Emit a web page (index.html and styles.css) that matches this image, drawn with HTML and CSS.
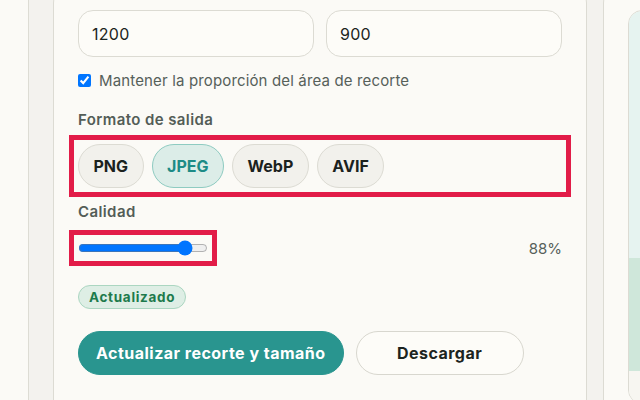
FILE: index.html
```html
<!DOCTYPE html>
<html lang="es">
<head>
<meta charset="utf-8">
<title>Recorte y tamaño</title>
<link rel="stylesheet" href="styles.css">
</head>
<body>
<div class="shell">
  <section class="card settings">
    <div class="size-row">
      <input class="field" type="text" value="1200" aria-label="Ancho">
      <input class="field" type="text" value="900" aria-label="Alto">
    </div>
    <label class="check-row">
      <input type="checkbox" class="check" checked>
      <span>Mantener la proporción del área de recorte</span>
    </label>
    <div class="label">Formato de salida</div>
    <div class="format-row highlight">
      <button class="pill">PNG</button>
      <button class="pill active">JPEG</button>
      <button class="pill">WebP</button>
      <button class="pill">AVIF</button>
    </div>
    <div class="label quality-label">Calidad</div>
    <div class="quality-row">
      <input type="range" class="slider highlight" min="10" max="100" value="88" aria-label="Calidad">
      <span class="quality-value">88%</span>
    </div>
    <span class="badge">Actualizado</span>
    <div class="actions">
      <button class="btn primary">Actualizar recorte y tamaño</button>
      <button class="btn secondary">Descargar</button>
    </div>
  </section>
  <section class="card preview-card">
    <div class="preview-box">
      <div class="preview-area">
        <div class="crop-block"></div>
      </div>
      <div class="preview-foot"></div>
    </div>
  </section>
</div>
</body>
</html>
```

FILE: styles.css
```css
html, body {
  margin: 0;
  padding: 0;
}
body {
  background: #fbfaf6;
  font-family: Inter, "Noto Sans", sans-serif;
  color: #1c2420;
  width: 640px;
  height: 400px;
  overflow: hidden;
}
.shell {
  margin-left: 28px;
  margin-top: -15px;
  border-left: 1px solid #dddcd4;
  background: #f3f2ee;
  padding: 0 24px 24px;
  display: grid;
  grid-template-columns: 534px 534px;
  column-gap: 16px;
  width: 1200px;
}
.card {
  background: #fbfaf6;
  border: 1px solid #dcdbd3;
  border-radius: 18px;
  padding: 24px;
  box-sizing: border-box;
}
.settings {
  display: flex;
  flex-direction: column;
}
.size-row {
  display: grid;
  grid-template-columns: 1fr 1fr;
  column-gap: 12px;
}
.field {
  height: 47px;
  box-sizing: border-box;
  border: 1px solid #dcdbd3;
  border-radius: 15px;
  background: #fdfcf8;
  padding: 0 13px;
  font: 400 16px Inter, "Noto Sans", sans-serif;
  letter-spacing: 0.3px;
  color: #1c2420;
  outline: none;
  min-width: 0;
}
.check-row {
  display: flex;
  align-items: center;
  gap: 8px;
  margin-top: 13px;
  height: 20px;
  font-size: 15px;
  letter-spacing: 0.15px;
  color: #56605a;
}
.check {
  margin: 0;
  width: 13px;
  height: 13px;
}
.label {
  margin-top: 20px;
  height: 20px;
  line-height: 20px;
  font-size: 15px;
  font-weight: 600;
  letter-spacing: 0.4px;
  color: #535d57;
}
.format-row {
  display: flex;
  gap: 8px;
  margin-top: 14px;
}
.highlight {
  outline: 5px solid #e21c48;
  outline-offset: 4px;
}
.pill {
  height: 44px;
  padding: 0 14.5px;
  border-radius: 22px;
  border: 1px solid #dcdbd3;
  background: #f2f1ec;
  font: 700 16px Inter, "Noto Sans", sans-serif;
  color: #1b221e;
}
.pill.active {
  background: #dcede8;
  border-color: #8ecbc1;
  color: #1d8b86;
}
.quality-label {
  margin-top: 14px;
}
.quality-row {
  display: flex;
  align-items: center;
  justify-content: space-between;
  margin-top: 17px;
  height: 18px;
}
.slider {
  margin: 0;
  width: 130px;
  height: 18px;
}
.quality-value {
  font-size: 15px;
  color: #56605a;
}
.badge {
  align-self: flex-start;
  margin-top: 28px;
  height: 24px;
  box-sizing: border-box;
  padding: 0 10px;
  display: inline-flex;
  align-items: center;
  border-radius: 12px;
  border: 1px solid #abd6c1;
  background: #deeee5;
  color: #1d7a4c;
  font-size: 13.5px;
  letter-spacing: 0.7px;
  font-weight: 700;
}
.actions {
  display: flex;
  gap: 12px;
  margin-top: 22px;
}
.btn {
  height: 44px;
  border-radius: 22px;
  padding: 0 17px;
  font: 700 16px Inter, "Noto Sans", sans-serif;
  letter-spacing: 0.48px;
}
.btn.primary {
  background: #29958f;
  border: 1px solid #29958f;
  color: #ffffff;
}
.btn.secondary {
  min-width: 168px;
  background: #fdfcf8;
  border: 1px solid #d8d7cf;
  color: #1c2420;
}
.preview-card {
  display: flex;
  flex-direction: column;
  justify-content: flex-end;
}
.preview-box {
  border: 1px solid #dcdbd3;
  border-radius: 14px;
  overflow: hidden;
  display: flex;
  flex-direction: column;
  background: #f7f6f1;
}
.preview-area {
  height: 360px;
  background: #e6f3f0;
  display: flex;
  flex-direction: column;
  justify-content: flex-end;
}
.crop-block {
  height: 113px;
  background: #cfe7da;
}
.preview-foot {
  height: 32px;
  background: #f7f6f1;
}
```
